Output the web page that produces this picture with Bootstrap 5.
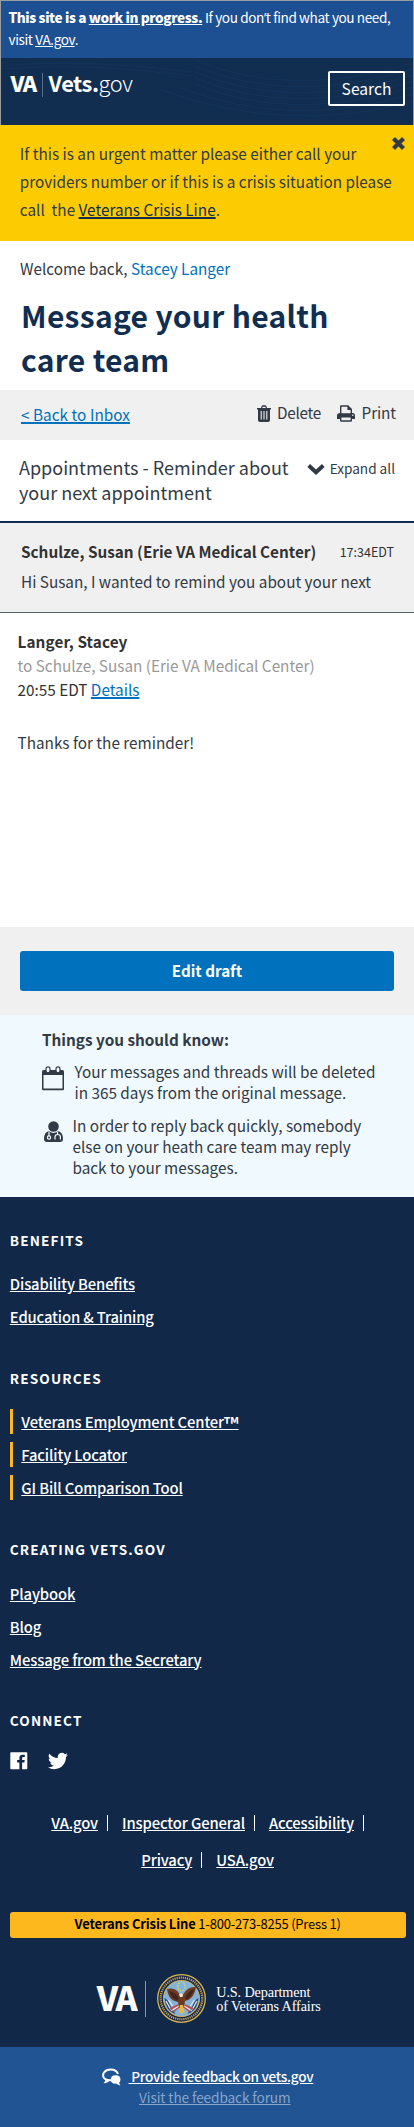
<!DOCTYPE html>
<html lang="en">
<head>
<meta charset="utf-8">
<meta name="viewport" content="width=device-width, initial-scale=1">
<title>Message your health care team</title>
<link href="https://cdn.jsdelivr.net/npm/bootstrap@5.3.0/dist/css/bootstrap.min.css" rel="stylesheet">
<style>
body{font-family:"Noto Sans CJK SC","Source Sans Pro",sans-serif;font-size:15.3px;line-height:24px;color:#323a45;background:#fff;white-space:nowrap;overflow-x:hidden}
a{color:inherit}
svg{display:block;flex:none}
.site-top{border:solid #9a9d9f;border-width:1px 1px 0;color:#fff;height:125px}
.wip-bar{background:#1d5092;height:57px;padding:6px 0 0 7.5px;font-size:13.6px;line-height:21.5px;font-weight:400;letter-spacing:-.4px}
.wip-bar strong{font-weight:900;letter-spacing:-.39px}
.apos{font-family:"Open Sans",sans-serif;line-height:0}
.masthead{background:#112e51;height:67px;padding:12.5px 8px 0 9.5px;position:relative;overflow:hidden}
.masthead .waves{position:absolute;left:0;top:0}
.brand{position:relative;font-size:21.8px;line-height:24px;letter-spacing:-.45px}
.brand .va{font-weight:900;letter-spacing:-1.2px}
.brand .bar{width:1px;height:24px;background:#5a6d88;margin:2px 5.5px 0 6px}
.brand .thin{font-weight:300}
.btn-search{position:relative;width:77px;height:35px;border:2px solid #fff;border-radius:2px;color:#fff;font-size:15.6px;line-height:24px;padding:0 0 1px;font-weight:400}
.btn-search:hover{background:#205493;color:#fff}
.crisis-note{background:#fdcb02;height:116px;padding:14px 0 0 19.8px;line-height:28px;position:relative}
.crisis-note a{color:#112e51;text-decoration-thickness:1.5px}
.crisis-note .shut{position:absolute;left:392px;top:12px}
.blue,.blue a{color:#0071bc}
.blue{text-decoration-thickness:1.5px}
.welcome{padding:15px 0 0 20px}
h1{font-size:30px;line-height:44px;font-weight:700;color:#112e51;letter-spacing:.3px;margin:13px 0 0;padding:0 0 9px 21px}
.toolbar{background:#f0f0f0;height:50px;padding:10px 18px 0 21px}
.back-link{margin-top:2px;letter-spacing:.04px}
.subject{height:81px;padding:14.6px 19px 0 19px;font-size:18px;line-height:25px}
.expand{font-size:13.6px;padding-top:1.7px}
.msg-closed{background:#f0f0f0;border-top:2px solid #112e51;border-bottom:1px solid #5b616b;height:92px;padding:16px 20px 0 21px}
.stamp{font-size:12.5px;padding-top:1.2px}
.ink{color:#323232}
.msg-open{height:314px;padding:16.3px 0 0 17.5px}
.compose{background:#f0f0f0;height:88px;padding:24px 20px}
.btn-edit{background:#0071bc;color:#fff;height:40px;border:0;border-radius:3px;font-size:15.2px;line-height:24px;font-weight:700;padding:0 0 3px}
.btn-edit:hover{background:#205493;color:#fff}
.tips{background:#f0f9fd;height:182px;padding:12px 0 0 42px}
.tips p{line-height:21px;margin:0}
footer{background:#112849;color:#fff;height:850px;padding:32.8px 8.5px 0 9.8px;font-size:14.8px;font-weight:500;letter-spacing:-.13px}
footer h2{font-size:13.6px;line-height:20px;font-weight:700;letter-spacing:1.15px;margin:0 0 17.4px}
footer ul{margin:0 0 34.6px}
footer li{line-height:33px}
.marked li{padding-left:11.5px;position:relative}
.marked li::before{content:"";position:absolute;left:0;top:4px;width:3px;height:25px;background:#fdb81e}
.tm{font-size:20px;line-height:0;vertical-align:-3.5px}
.legal{line-height:36.3px;margin-top:35.6px}
.legal .sep{width:1px;height:16px;background:#fff;margin:10px 14px 0 9px}
.hotline{background:#fdb81e;color:#000;height:26px;line-height:23px;border-radius:3px;font-size:13px;font-weight:400;letter-spacing:-.2px;margin:34.4px 0 36px}
.hotline b{letter-spacing:-.14px}
.va-big{font-size:33.5px;line-height:46px;font-weight:900;letter-spacing:-2px;width:40px}
.dept{font-family:"Liberation Serif",serif;font-size:14.2px;line-height:14px;letter-spacing:-.12px;font-weight:400}
.feedback{background:#205493;color:#fff;height:80px;font-size:13.6px;line-height:21.5px;letter-spacing:-.27px;padding-top:18.6px}
.feedback .dim{color:#8ba4ca}
</style>
</head>
<body>
<div class="site-top">
  <div class="wip-bar"><strong>This site is a <a href="#">work in progress.</a></strong> If you don<span class="apos">’</span>t find what you need,<br>visit <a href="#">VA.gov</a>.</div>
  <header class="masthead d-flex justify-content-between align-items-start">
    <svg class="waves" width="412" height="67" fill="none" stroke="#1b4470" stroke-width=".7" opacity=".4"><path d="M0 8Q80 0 190 14M0 11Q90 4 190 18M194 2Q290 42 412 5M194 8Q290 48 412 11M194 14Q290 54 412 17M194 20Q290 60 412 23M194 26Q290 66 412 29M180 30Q290 72 412 36M160 32Q290 78 412 43"/></svg>
    <div class="brand d-flex"><span class="va">VA</span><span class="bar"></span><span><b>Vets.</b><span class="thin">gov</span></span></div>
    <button class="btn btn-search">Search</button>
  </header>
</div>
<div class="crisis-note">If this is an urgent matter please either call your<br>providers number or if this is a crisis situation please<br>call&nbsp; the <a href="#">Veterans Crisis Line</a>.
  <svg class="shut" width="13" height="13" viewBox="0 0 13 13" stroke="#323a45" stroke-width="4.2" stroke-linecap="square"><path d="M3 3l7 7M10 3l-7 7"/></svg>
</div>
<main>
  <div class="welcome">Welcome back, <span class="blue">Stacey Langer</span></div>
  <h1>Message your health<br>care team</h1>
  <div class="toolbar d-flex">
    <a href="#" class="blue back-link align-self-start">&lt; Back to Inbox</a>
    <div class="d-flex ms-auto">
      <svg width="14" height="17" viewBox="0 0 14 17" style="margin:5px 6px 0 0" fill="#323a45"><path d="M0 3h4l.7-2Q5 .2 6 .2h2q1 0 1.300.800L10 3h4v1.500H0z"/><path fill="#f0f0f0" d="M5.200 3l.5-1.300h2.600L8.800 3z"/><path d="M1 4h12v11q0 2-2 2H3q-2 0-2-2z"/><path stroke="#f0f0f0" stroke-width="1.100" d="M4.200 6v8.500M7 6v8.500M9.800 6v8.500"/></svg>
      <span style="letter-spacing:-.25px">Delete</span>
      <svg width="18" height="17" viewBox="0 0 18 17" style="margin:5px 6.500px 0 16px"><path fill="#323a45" d="M3 8V1.500Q3 .3 4.200.3h7L15 4v4h.5Q18 8 18 10.500V14h-3v1.500q0 1.200-1.200 1.200H4.200Q3 16.700 3 15.500V14H0v-3.500Q0 8 3 8z"/><path fill="#f0f0f0" d="M4.400 1.700h6V5h3.200v3.300H4.400zM4.400 12.500h9.200v2.800H4.400z"/><circle cx="15.700" cy="10.200" r=".8" fill="#f0f0f0"/></svg>
      <span style="letter-spacing:-.1px">Print</span>
    </div>
  </div>
  <div class="subject d-flex justify-content-between">
    <div>Appointments - Reminder about<br>your next appointment</div>
    <div class="expand d-flex"><svg width="18" height="13" viewBox="0 0 18 13" fill="none" stroke="#323a45" stroke-width="4" style="margin:7px 4.500px 0 0"><path d="M1.700 2.500L9 9.300l7.300-6.800"/></svg>Expand all</div>
  </div>
  <section class="msg-closed">
    <div class="d-flex justify-content-between ink"><b>Schulze, Susan (Erie VA Medical Center)</b><span class="stamp">17:34EDT</span></div>
    <div style="margin-top:5px">Hi Susan, I wanted to remind you about your next</div>
  </section>
  <section class="msg-open">
    <div class="ink"><b style="letter-spacing:.1px">Langer, Stacey</b><br><span style="color:#999">to Schulze, Susan (Erie VA Medical Center)</span><br>20:55 EDT <a href="#" class="blue">Details</a></div>
    <p class="mb-0" style="margin-top:29px">Thanks for the reminder!</p>
  </section>
  <div class="compose"><button class="btn btn-edit w-100">Edit draft</button></div>
  <aside class="tips">
    <b>Things you should know:</b>
    <div class="d-flex" style="margin-top:10px">
      <svg width="22" height="25" viewBox="0 0 22 25" style="margin:5px 10.500px 0 0"><path fill="#323a45" d="M1.500 4h19Q22 4 22 5.500V23q0 1.200-1.200 1.200H1.200Q0 24.200 0 23V5.500Q0 4 1.500 4z"/><path fill="#f0f9fd" d="M1.500 9h19v13.500h-19z"/><rect x="4" y=".8" width="4" height="6" rx="2" fill="#f0f9fd" stroke="#323a45" stroke-width="1.200"/><rect x="14" y=".8" width="4" height="6" rx="2" fill="#f0f9fd" stroke="#323a45" stroke-width="1.200"/></svg>
      <p>Your messages and threads will be deleted<br>in 365 days from the original message.</p>
    </div>
    <div class="d-flex" style="margin-top:12px">
      <svg width="20" height="21" viewBox="0 0 20 21" style="margin:6px 8.500px 0 2px"><circle cx="9.500" cy="5.500" r="5.300" fill="#323a45"/><path fill="#323a45" d="M5 10q4.500 4 9 0 5 1 5 8 0 3-3 3H3q-3 0-3-3 0-7 5-8z"/><path fill="none" stroke="#f0f9fd" stroke-width="1.200" d="M5 10.500v4.500M13.500 10.500v3M11 18.500v-2.500q0-2.500 2.700-2.500t2.700 2.500v2.500"/><circle cx="5" cy="16.500" r="1.600" fill="#323a45" stroke="#f0f9fd" stroke-width="1.200"/></svg>
      <p>In order to reply back quickly, somebody<br>else on your heath care team may reply<br>back to your messages.</p>
    </div>
  </aside>
</main>
<footer>
  <h2>BENEFITS</h2>
  <ul class="list-unstyled"><li><a href="#">Disability Benefits</a></li><li><a href="#">Education &amp; Training</a></li></ul>
  <h2>RESOURCES</h2>
  <ul class="list-unstyled marked"><li><a href="#">Veterans Employment Center<span class="tm">™</span></a></li><li><a href="#">Facility Locator</a></li><li><a href="#">GI Bill Comparison Tool</a></li></ul>
  <h2 style="margin-bottom:18px">CREATING VETS.GOV</h2>
  <ul class="list-unstyled"><li><a href="#">Playbook</a></li><li><a href="#">Blog</a></li><li><a href="#">Message from the Secretary</a></li></ul>
  <h2 style="margin-bottom:21.400px">CONNECT</h2>
  <div class="d-flex" style="gap:20px">
    <svg width="18" height="18" viewBox="0 0 18 18" fill="#fff"><path d="M1 .3h15.600q.7 0 .7.700v15.600q0 .7-.7.700h-4.500v-6.700h2.300l.3-2.600h-2.600V6.300q0-1.200 1.300-1.200h1.400V2.800h-2q-3.400 0-3.400 3.200v2H7.100v2.600h2.300v6.700H1q-.7 0-.7-.7V1Q.3.300 1 .3z"/></svg>
    <svg width="20" height="18" viewBox="0 0 24 21" fill="#fff"><path d="M23.950 3.070a10 10 0 01-2.820.77 4.960 4.960 0 002.160-2.720c-.95.560-2 .960-3.120 1.180a4.920 4.920 0 00-8.380 4.480C7.690 6.590 4.070 4.630 1.640 1.660a4.920 4.920 0 001.520 6.570 4.900 4.900 0 01-2.230-.61v.06c0 2.380 1.700 4.370 3.950 4.820a5 5 0 01-2.210.09 4.940 4.940 0 004.600 3.420A9.870 9.870 0 010 18.040a14 14 0 007.550 2.210c9.050 0 14-7.500 14-13.980 0-.21 0-.42-.02-.63a9.900 9.900 0 002.460-2.550z"/></svg>
  </div>
  <nav class="legal">
    <div class="d-flex justify-content-center"><a href="#">VA.gov</a><span class="sep"></span><a href="#">Inspector General</a><span class="sep"></span><a href="#">Accessibility</a><span class="sep me-0"></span></div>
    <div class="d-flex justify-content-center"><a href="#">Privacy</a><span class="sep"></span><a href="#">USA.gov</a></div>
  </nav>
  <div class="hotline text-center"><b>Veterans Crisis Line</b> 1-800-273-8255 (Press 1)</div>
  <div class="d-flex" style="padding-left:87px">
    <div class="va-big">VA</div>
    <span style="width:1px;height:36px;background:#8995a7;margin:7px 11px 0 8.500px"></span>
    <svg width="49" height="49" viewBox="0 0 49 49">
      <circle cx="24.500" cy="24.500" r="23.800" fill="#1c2748" stroke="#d6b653" stroke-width="1.300"/>
      <circle cx="24.500" cy="24.500" r="20.800" fill="none" stroke="#c9b25c" stroke-width="2.200" stroke-dasharray="1.100 1"/>
      <circle cx="24.500" cy="24.500" r="18" fill="#83b4d8" stroke="#d6b653" stroke-width="1"/>
      <path fill="#2b4678" d="M7.500 24q4 2 6 8l5 8q-10-3-11-16zM41.500 24q-4 2-6 8l-5 8q10-3 11-16z"/>
      <path stroke="#e6e8ee" stroke-width="1.300" d="M9 27l5 9M40 27l-5 9M11.500 26l4 6M37.500 26l-4 6"/>
      <path stroke="#c54444" stroke-width="1.500" fill="none" d="M13 35l8-4M16 38l6-5M36 35l-8-4M33 38l-6-5"/>
      <path stroke="#f3eeee" stroke-width="1" fill="none" d="M14 37l8-5M35 37l-8-5"/>
      <path fill="#6d3a22" d="M10 15q8-2 12.500 5l2 2 2-2Q31 12 39 13q-1 7-5 11-3 3-6 3l-1 7h-5l-1-6q-6-1-8.500-5Q10.500 19.500 10 15z"/>
      <path fill="#43251b" d="M12 17q6 1 10 7l-2 3q-6-4-8-10zM37 15q-6 2-9 9l1 2q6-3 8-11z"/>
      <path fill="#f2ead8" d="M22 20.500q2-2 4 0l-.5 2.500h-2.500z"/><path fill="#eab93a" d="M23 31h3l1.500 7-3 2-2.500-2z"/>
      <path fill="none" stroke="#e5d35d" stroke-width="1.400" stroke-dasharray="1.400 1.300" d="M21 12.500a3.600 3.600 0 117 0 3.600 3.600 0 11-7 0"/>
    </svg>
    <div class="dept" style="margin:11px 0 0 10px">U.S. Department<br>of Veterans Affairs</div>
  </div>
</footer>
<div class="feedback">
  <div class="d-flex" style="padding-left:102px;font-weight:500">
    <svg width="19" height="18" viewBox="0 0 19 18" style="margin:2px 7.500px 0 0"><path fill="none" stroke="#fff" stroke-width="2" d="M10 12.200Q4 13 1.800 9.800.300 7 2 4.500 4 1.500 8.500 1.500q6 0 7.500 4.500"/><path fill="#fff" d="M3.500 10.500Q4 13.500 1.500 15.300q4 .2 6.500-3.300zM13.500 7.200q5 0 5 4.300 0 2-1.300 3.200.200 1.700 1.300 2.800-2.200 0-3.800-1.700-5.700.5-5.900-4.300 0-4.300 4.700-4.300z"/></svg>
    <a href="#">&nbsp;Provide feedback on vets.gov</a>
  </div>
  <div style="padding-left:139px;letter-spacing:-.080px"><a href="#" class="dim">Visit the feedback forum</a></div>
</div>
<script src="https://cdn.jsdelivr.net/npm/bootstrap@5.3.0/dist/js/bootstrap.bundle.min.js"></script>
</body>
</html>
